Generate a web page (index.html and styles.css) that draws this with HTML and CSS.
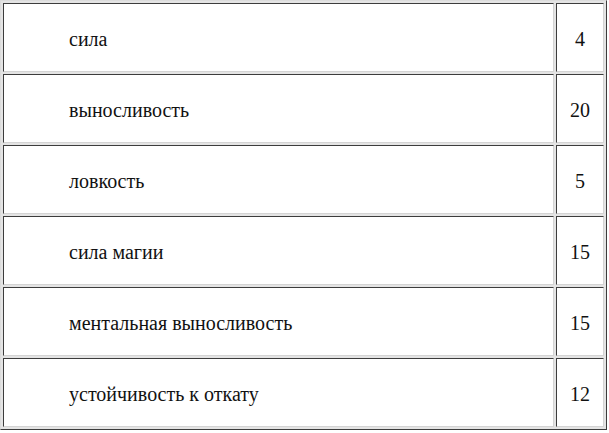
FILE: index.html
```html
<!DOCTYPE html>
<html>
<head>
<meta charset="utf-8">
<link rel="stylesheet" href="styles.css">
</head>
<body>
<table class="stats">
  <tr><td class="name">сила</td><td class="val">4</td></tr>
  <tr><td class="name">выносливость</td><td class="val">20</td></tr>
  <tr><td class="name">ловкость</td><td class="val">5</td></tr>
  <tr><td class="name">сила магии</td><td class="val">15</td></tr>
  <tr><td class="name">ментальная выносливость</td><td class="val">15</td></tr>
  <tr><td class="name">устойчивость к откату</td><td class="val">12</td></tr>
</table>
</body>
</html>
```
FILE: styles.css
```css
html, body {
  margin: 0;
  padding: 0;
  background: #ffffff;
}
.stats {
  width: 607px;
  border-collapse: separate;
  border-spacing: 2px;
  border-style: solid;
  border-width: 1px;
  border-color: #dcdcdc #3c3c3c #3c3c3c #dcdcdc;
  background: #e4e4e4;
  font-family: "Liberation Serif", "Times New Roman", serif;
  font-size: 20px;
  color: #111111;
}
.stats td {
  box-sizing: border-box;
  height: 69px;
  background: #ffffff;
  border-style: solid;
  border-width: 1px;
  border-color: #3c3c3c #d4d4d4 #d4d4d4 #3c3c3c;
  padding: 4px 0 0 0;
  vertical-align: middle;
}
.stats .name {
  padding-left: 65px;
  text-align: left;
}
.stats .val {
  width: 48px;
  text-align: center;
}
```
